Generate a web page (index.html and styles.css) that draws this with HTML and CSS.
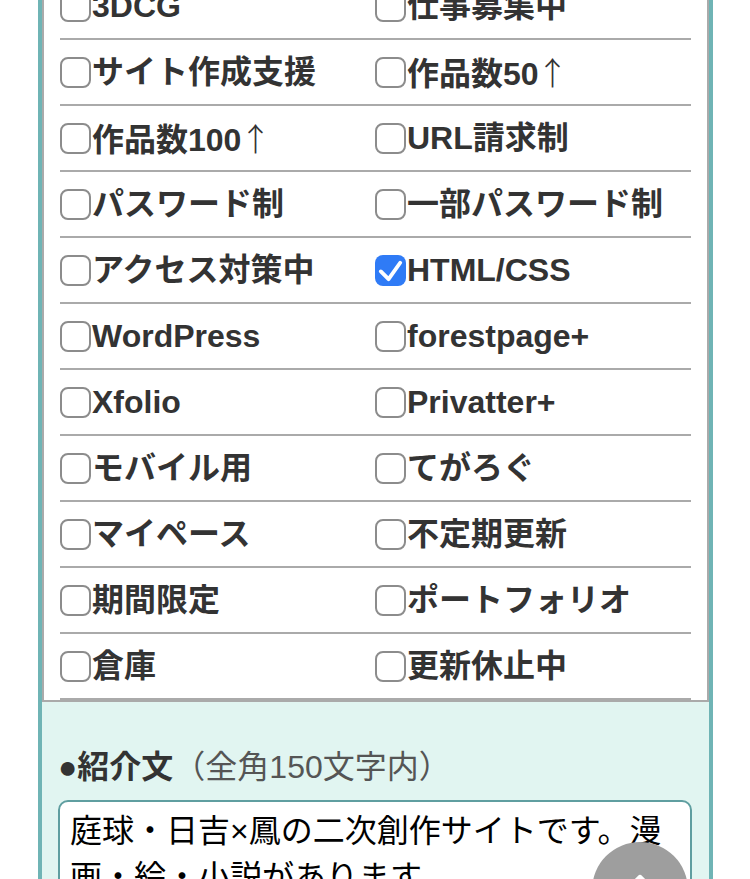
FILE: index.html
```html
<!DOCTYPE html>
<html lang="ja">
<head>
<meta charset="utf-8">
<title>サイト登録</title>
<link rel="stylesheet" href="styles.css">
</head>
<body>
<div class="wrap">
  <div class="tags">
    <label class="tag"><span class="box"></span><span class="txt">3DCG</span></label>
    <label class="tag"><span class="box"></span><span class="txt">仕事募集中</span></label>
    <label class="tag"><span class="box"></span><span class="txt">サイト作成支援</span></label>
    <label class="tag"><span class="box"></span><span class="txt">作品数50<span class="arr">↑</span></span></label>
    <label class="tag"><span class="box"></span><span class="txt">作品数100<span class="arr">↑</span></span></label>
    <label class="tag"><span class="box"></span><span class="txt">URL請求制</span></label>
    <label class="tag"><span class="box"></span><span class="txt">パスワード制</span></label>
    <label class="tag"><span class="box"></span><span class="txt">一部パスワード制</span></label>
    <label class="tag"><span class="box"></span><span class="txt">アクセス対策中</span></label>
    <label class="tag"><span class="box checked"><svg viewBox="0 0 32 32" width="32" height="32"><polyline points="6,17 14,25 26,8" fill="none" stroke="#fff" stroke-width="4" stroke-linecap="round" stroke-linejoin="round"/></svg></span><span class="txt">HTML/CSS</span></label>
    <label class="tag"><span class="box"></span><span class="txt">WordPress</span></label>
    <label class="tag"><span class="box"></span><span class="txt">forestpage+</span></label>
    <label class="tag"><span class="box"></span><span class="txt">Xfolio</span></label>
    <label class="tag"><span class="box"></span><span class="txt">Privatter+</span></label>
    <label class="tag"><span class="box"></span><span class="txt">モバイル用</span></label>
    <label class="tag"><span class="box"></span><span class="txt">てがろぐ</span></label>
    <label class="tag"><span class="box"></span><span class="txt">マイペース</span></label>
    <label class="tag"><span class="box"></span><span class="txt">不定期更新</span></label>
    <label class="tag"><span class="box"></span><span class="txt">期間限定</span></label>
    <label class="tag"><span class="box"></span><span class="txt">ポートフォリオ</span></label>
    <label class="tag"><span class="box"></span><span class="txt">倉庫</span></label>
    <label class="tag"><span class="box"></span><span class="txt">更新休止中</span></label>
  </div>
  <div class="intro">
    <div class="intro-label">●<b>紹介文</b><span class="note">（全角150文字内）</span></div>
    <textarea class="intro-text">庭球・日吉×鳳の二次創作サイトです。漫画・絵・小説があります。</textarea>
  </div>
</div>
<button class="to-top" type="button" aria-label="ページトップへ"><svg viewBox="0 0 96 96" width="96" height="96"><polyline points="28,56 48,36 68,56" fill="none" stroke="#fff" stroke-width="6" stroke-linecap="round" stroke-linejoin="round"/></svg></button>
</body>
</html>
```

FILE: styles.css
```css
html, body {
  margin: 0;
  padding: 0;
  background: #fff;
}
body {
  font-family: "Liberation Sans", "Noto Sans CJK JP", sans-serif;
  color: #333;
  overflow: hidden;
}
.wrap {
  margin: -28px 0 0 38px;
  width: 667px;
  border-left: 4px solid #6fb4b5;
  border-right: 4px solid #6fb4b5;
  background: #e1f5f1;
  padding-bottom: 200px;
}
.tags {
  background: #fff;
  border: 2px solid #aaa;
  padding: 0 16px;
  display: grid;
  grid-template-columns: 315px 1fr;
}
.tag {
  display: flex;
  align-items: center;
  height: 64px;
  border-bottom: 2px solid #aaa;
  font-size: 32px;
  font-weight: bold;
  color: #333;
  white-space: nowrap;
}
.box {
  flex: none;
  box-sizing: border-box;
  width: 31px;
  height: 31px;
  border: 2.5px solid #8c8c8c;
  border-radius: 8px;
  margin-right: 1px;
  background: #fff;
  display: flex;
  align-items: center;
  justify-content: center;
}
.box.checked {
  border: none;
  background: #2f7bf6;
}
.box svg {
  display: block;
  width: 31px;
  height: 31px;
}
.txt {
  line-height: 1;
}
.arr {
  font-family: "Noto Sans CJK JP", sans-serif;
  font-weight: 300;
  margin-left: -2px;
}
.intro {
  padding: 41px 17px 0 16px;
}
.intro-label {
  font-size: 32px;
  line-height: 48px;
  color: #333;
}
.intro-label b {
  font-weight: bold;
}
.note {
  color: #555;
  font-weight: normal;
}
.intro-text {
  display: block;
  margin-top: 9px;
  box-sizing: border-box;
  width: 100%;
  height: 160px;
  border: 2px solid #5f9ea0;
  border-radius: 10px;
  padding: 6px 10px;
  font-family: "Liberation Sans", "Noto Sans CJK JP", sans-serif;
  font-size: 32px;
  line-height: 46px;
  color: #000;
  background: #fff;
  resize: none;
  overflow: hidden;
  outline: none;
}
.to-top {
  position: fixed;
  left: 592px;
  top: 842px;
  width: 96px;
  height: 96px;
  padding: 0;
  border: none;
  border-radius: 50%;
  background: #9e9e9e;
  cursor: pointer;
}
.to-top svg {
  display: block;
}
```
